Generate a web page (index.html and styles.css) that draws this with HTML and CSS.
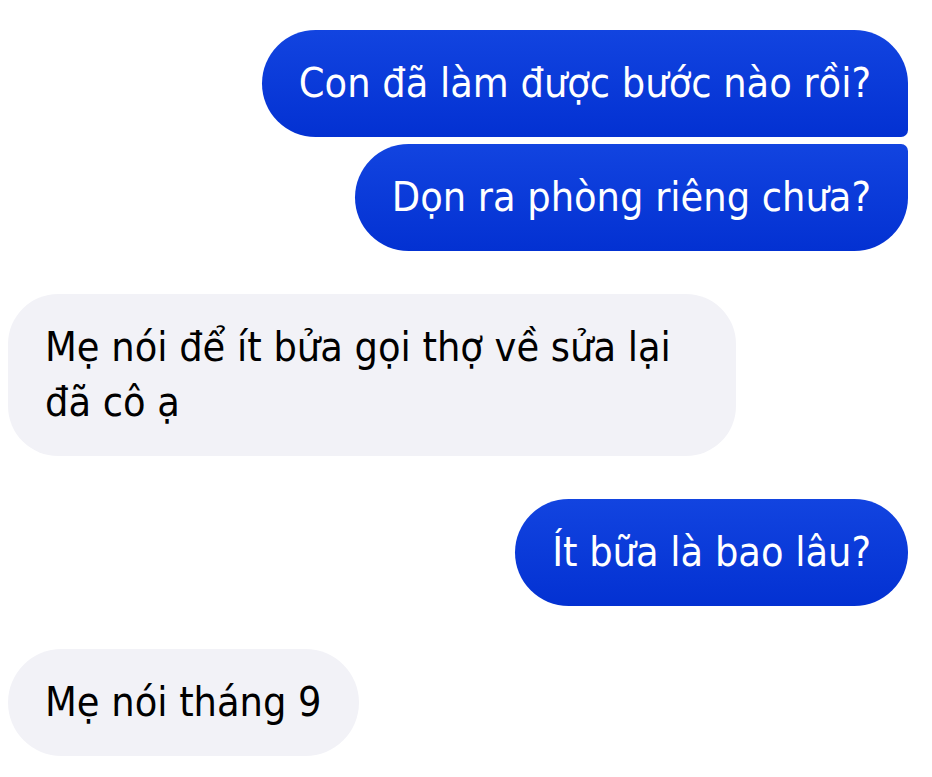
FILE: index.html
```html
<!DOCTYPE html>
<html lang="vi">
<head>
<meta charset="utf-8">
<title>Chat</title>
<link rel="stylesheet" href="styles.css">
</head>
<body>
<main class="chat">
  <div class="group group-out">
    <div class="bubble out first">Con đã làm được bước nào rồi?</div>
    <div class="bubble out last">Dọn ra phòng riêng chưa?</div>
  </div>
  <div class="group group-in">
    <div class="bubble in wide">Mẹ nói để ít bửa gọi thợ về sửa lại đã cô ạ</div>
  </div>
  <div class="group group-out">
    <div class="bubble out">Ít bữa là bao lâu?</div>
  </div>
  <div class="group group-in">
    <div class="bubble in">Mẹ nói tháng 9</div>
  </div>
</main>
</body>
</html>
```
FILE: styles.css
```css
html, body {
  margin: 0;
  padding: 0;
  background: #ffffff;
}

.chat {
  display: flex;
  flex-direction: column;
  gap: 43px;
  padding: 30px 24px 0 8px;
  font-family: "DejaVu Sans Condensed", "Liberation Sans Narrow", "Noto Sans", sans-serif;
}

.group {
  display: flex;
  flex-direction: column;
  gap: 7px;
}

.group-out {
  align-items: flex-end;
}

.group-in {
  align-items: flex-start;
}

.bubble {
  box-sizing: border-box;
  max-width: 728px;
  padding: 26px 37px;
  font-size: 41px;
  line-height: 55px;
  border-radius: 54px;
}

.out {
  color: #ffffff;
  background: linear-gradient(180deg, #1244e0 0%, #0331d2 100%);
}

.out.first {
  border-bottom-right-radius: 7px;
}

.out.last {
  border-top-right-radius: 7px;
}

.in {
  color: #000000;
  background: #f2f2f7;
}

.in.wide {
  border-radius: 50px;
}
```
